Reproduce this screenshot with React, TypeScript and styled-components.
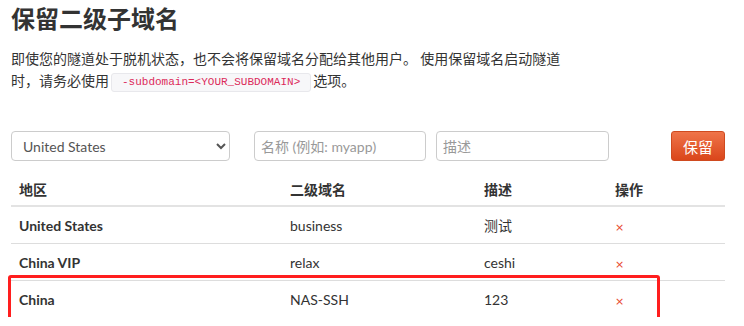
import styled, { createGlobalStyle } from "styled-components";

const GlobalStyle = createGlobalStyle`
  html, body {
    margin: 0;
    padding: 0;
    background: #fff;
  }
  body {
    font-family: "Lato", "Noto Sans CJK SC", sans-serif;
    font-size: 14px;
    color: #333;
  }
`;

const Page = styled.div`
  padding: 5px 19px 0 11px;
  width: 714px;
`;

const Title = styled.h1`
  margin: 0;
  font-size: 24px;
  line-height: 26px;
  font-weight: 700;
  font-family: "Noto Sans CJK SC", sans-serif;
  color: #333;
`;

const Intro = styled.p`
  margin: 16px 0 0;
  width: 562px;
  line-height: 22px;
  font-family: "Noto Sans CJK SC", sans-serif;
`;

const Code = styled.code`
  display: inline-block;
  font-family: "Liberation Mono", monospace;
  font-size: 11px;
  line-height: 17px;
  padding: 0 10px;
  margin: 0 2px;
  color: #dc2a5a;
  background: #f7f7f9;
  border: 1px solid #e8e8ec;
  border-radius: 3px;
  vertical-align: 1px;
`;

const FormRow = styled.div`
  display: flex;
  align-items: center;
  margin-top: 39px;
  height: 30px;
`;

const Select = styled.select`
  box-sizing: border-box;
  width: 219px;
  height: 30px;
  padding: 0 6px 0 7px;
  font-family: "Lato", sans-serif;
  font-size: 14px;
  color: #555;
  background: #fff;
  border: 1px solid #ccc;
  border-radius: 4px;
`;

const Input = styled.input<{ w: number; gap: number }>`
  box-sizing: border-box;
  width: ${(p) => p.w}px;
  height: 30px;
  margin-left: ${(p) => p.gap}px;
  padding: 0 6px;
  font-family: "Lato", "Noto Sans CJK SC", sans-serif;
  font-size: 14px;
  color: #555;
  border: 1px solid #ccc;
  border-radius: 4px;
  &::placeholder {
    color: #999;
  }
`;

const SaveButton = styled.button`
  margin-left: auto;
  width: 54px;
  height: 30px;
  padding: 0;
  font-family: "Noto Sans CJK SC", sans-serif;
  font-size: 15px;
  color: #fff;
  border: 1px solid #cf4a1f;
  border-radius: 3px;
  background: linear-gradient(#ef7449, #da461b);
`;

const TableWrap = styled.div`
  position: relative;
  margin-top: 11px;
`;

const Table = styled.table`
  width: 714px;
  border-collapse: collapse;
  table-layout: fixed;

  th {
    text-align: left;
    font-weight: 700;
    height: 33px;
    padding: 0 8px;
    border-bottom: 2px solid #e3e3e3;
    font-family: "Noto Sans CJK SC", sans-serif;
  }

  td {
    height: 36px;
    padding: 0 8px;
    border-top: 1px solid #ddd;
  }
`;

const RegionCell = styled.td`
  font-weight: 700;
`;

const RemoveMark = styled.span`
  display: inline-block;
  color: #e8482d;
  font-size: 11px;
  font-family: "DejaVu Sans", sans-serif;
`;

const Highlight = styled.div`
  position: absolute;
  left: -3px;
  top: 103px;
  width: 646px;
  height: 39px;
  border: 3px solid #ff1e1e;
  border-radius: 3px;
  pointer-events: none;
`;

const rows = [
  { region: "United States", sub: "business", desc: "测试" },
  { region: "China VIP", sub: "relax", desc: "ceshi" },
  { region: "China", sub: "NAS-SSH", desc: "123" },
];

const App = () => {
  return (
    <>
      <GlobalStyle />
      <Page>
        <Title>保留二级子域名</Title>
        <Intro>
          即使您的隧道处于脱机状态，也不会将保留域名分配给其他用户。 使用保留域名启动隧道时，请务必使用
          <Code>-subdomain=&lt;YOUR_SUBDOMAIN&gt;</Code>
          选项。
        </Intro>
        <FormRow>
          <Select defaultValue="us">
            <option value="us">United States</option>
            <option value="vip">China VIP</option>
            <option value="cn">China</option>
          </Select>
          <Input w={172} gap={24} placeholder="名称 (例如: myapp)" />
          <Input w={173} gap={10} placeholder="描述" />
          <SaveButton>保留</SaveButton>
        </FormRow>
        <TableWrap>
          <Table>
            <colgroup>
              <col style={{ width: 271 }} />
              <col style={{ width: 194 }} />
              <col style={{ width: 131 }} />
              <col style={{ width: 118 }} />
            </colgroup>
            <thead>
              <tr>
                <th>地区</th>
                <th>二级域名</th>
                <th>描述</th>
                <th>操作</th>
              </tr>
            </thead>
            <tbody>
              {rows.map((r) => (
                <tr key={r.region}>
                  <RegionCell>{r.region}</RegionCell>
                  <td>{r.sub}</td>
                  <td>{r.desc}</td>
                  <td>
                    <RemoveMark>×</RemoveMark>
                  </td>
                </tr>
              ))}
            </tbody>
          </Table>
          <Highlight />
        </TableWrap>
      </Page>
    </>
  );
};

export default App;
